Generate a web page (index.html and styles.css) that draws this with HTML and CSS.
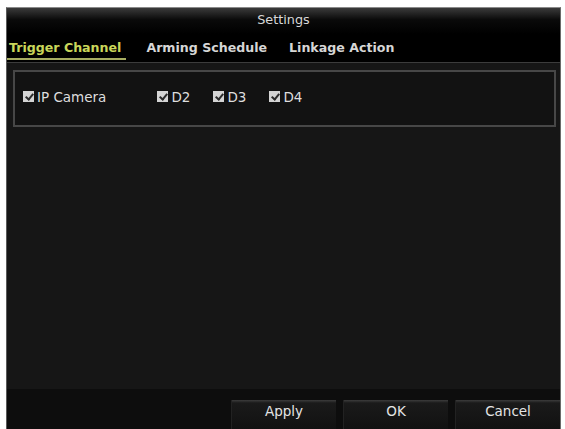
FILE: index.html
```html
<!DOCTYPE html>
<html lang="en">
<head>
<meta charset="UTF-8" />
<meta name="viewport" content="width=device-width, initial-scale=1" />
<title>Settings</title>
<link rel="stylesheet" href="styles.css">
</head>
<body>

<div class="dialog">
  <div class="title">Settings</div>

  <div class="tabs">
    <div class="tab active">Trigger Channel</div>
    <div class="tab">Arming Schedule</div>
    <div class="tab">Linkage Action</div>
  </div>

  <div class="content">
    <div class="group">
      <label class="check cam"><span class="box"></span>IP Camera</label>
      <label class="check"><span class="box"></span>D2</label>
      <label class="check"><span class="box"></span>D3</label>
      <label class="check"><span class="box"></span>D4</label>
    </div>
  </div>

  <div class="footer">
    <button>Apply</button>
    <button>OK</button>
    <button>Cancel</button>
  </div>
</div>

</body>
</html>
```

FILE: styles.css
```css
  body {
    margin: 0;
    padding: 7px 4px 0 6px;
    background-color: white;
    height: 429px;
    box-sizing: border-box;
    overflow: hidden;
    font-family: "DejaVu Sans", Verdana, sans-serif;
    color: #e0e0e0;
  }
  .dialog {
    height: 422px;
    background-color: #161616;
    border-top: 1px solid #8a8a8a;
    border-left: 1px solid #5a5a5a;
    border-right: 1px solid #6a6a6a;
    display: flex;
    flex-direction: column;
  }
  .title {
    height: 26px;
    line-height: 24px;
    text-align: center;
    font-size: 12.8px;
    color: #d8d8d8;
    background: linear-gradient(#3a3a3a, #0a0a0a 45%, #000);
  }
  .tabs {
    display: flex;
    height: 28px;
    background-color: #000;
    border-bottom: 1px solid #3c3c3c;
    padding-left: 0;
    gap: 18px;
  }
  .tab {
    font-size: 12.6px;
    font-weight: bold;
    line-height: 26px;
    color: #d6d6d6;
    padding: 0 2px;
  }
  .tab.active {
    color: #c9d65a;
    border-bottom: 2px solid #a8ae62;
    height: 24px;
    line-height: 28px;
    padding-right: 5px;
  }
  .tab.active ~ .tab {
    padding-top: 1px;
  }
  .content {
    flex: 1;
    padding: 7px 4px 0 6px;
  }
  .group {
    height: 57px;
    border: 2px solid #474747;
    display: flex;
    align-items: center;
    padding-left: 8px;
    padding-bottom: 4px;
    box-sizing: border-box;
    gap: 23px;
    background-color: #121212;
  }
  .check {
    display: flex;
    align-items: center;
    gap: 3px;
    font-size: 13.5px;
    color: #dedede;
  }
  .check.cam {
    margin-right: 28px;
  }
  .box {
    width: 11px;
    height: 11px;
    background-color: #d4d4d4;
    position: relative;
  }
  /* check mark drawn with two borders */
  .box::after {
    content: "";
    position: absolute;
    left: 4px;
    top: 1px;
    width: 3px;
    height: 6px;
    border-right: 2px solid #2a2a2a;
    border-bottom: 2px solid #2a2a2a;
    transform: rotate(40deg);
  }
  .footer {
    height: 41px;
    background-color: #0d0d0d;
    display: flex;
    justify-content: flex-end;
    align-items: flex-end;
    gap: 7px;
  }
  button {
    width: 105px;
    height: 30px;
    background: linear-gradient(#3c3c3c, #1a1a1a 3px, #111 100%);
    border: none;
    border-left: 1px solid #222;
    color: #e4e4e4;
    font-family: "DejaVu Sans", Verdana, sans-serif;
    font-size: 13.5px;
    padding: 0 0 9px 0;
  }
```
